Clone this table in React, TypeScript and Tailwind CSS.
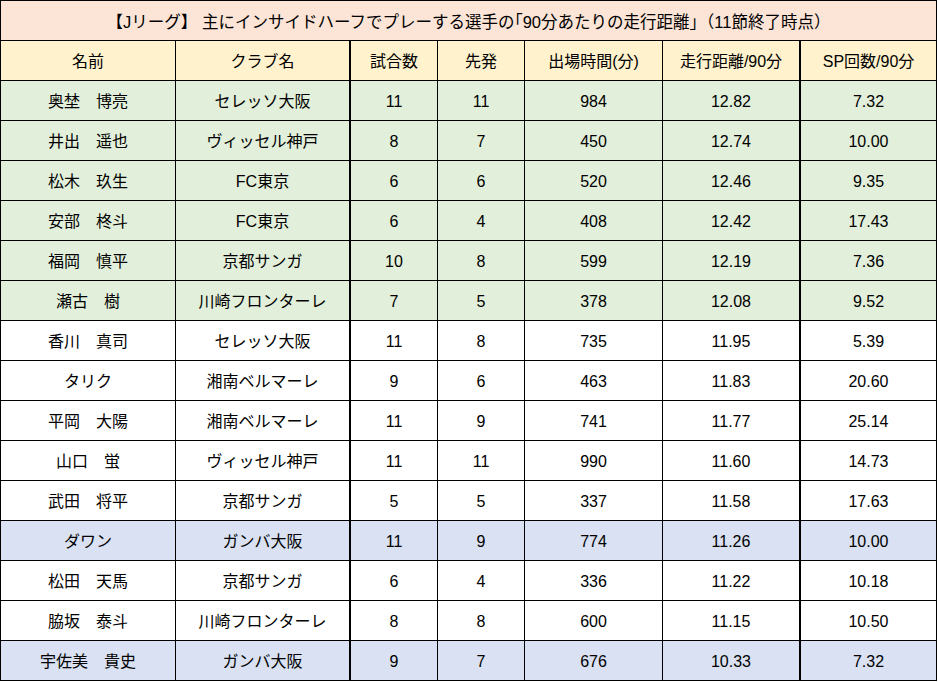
const rows: [string, string, number, number, number, string, string, string][] = [
  ['奥埜　博亮', 'セレッソ大阪', 11, 11, 984, '12.82', '7.32', 'g'],
  ['井出　遥也', 'ヴィッセル神戸', 8, 7, 450, '12.74', '10.00', 'g'],
  ['松木　玖生', 'FC東京', 6, 6, 520, '12.46', '9.35', 'g'],
  ['安部　柊斗', 'FC東京', 6, 4, 408, '12.42', '17.43', 'g'],
  ['福岡　慎平', '京都サンガ', 10, 8, 599, '12.19', '7.36', 'g'],
  ['瀬古　樹', '川崎フロンターレ', 7, 5, 378, '12.08', '9.52', 'g'],
  ['香川　真司', 'セレッソ大阪', 11, 8, 735, '11.95', '5.39', 'w'],
  ['タリク', '湘南ベルマーレ', 9, 6, 463, '11.83', '20.60', 'w'],
  ['平岡　大陽', '湘南ベルマーレ', 11, 9, 741, '11.77', '25.14', 'w'],
  ['山口　蛍', 'ヴィッセル神戸', 11, 11, 990, '11.60', '14.73', 'w'],
  ['武田　将平', '京都サンガ', 5, 5, 337, '11.58', '17.63', 'w'],
  ['ダワン', 'ガンバ大阪', 11, 9, 774, '11.26', '10.00', 'b'],
  ['松田　天馬', '京都サンガ', 6, 4, 336, '11.22', '10.18', 'w'],
  ['脇坂　泰斗', '川崎フロンターレ', 8, 8, 600, '11.15', '10.50', 'w'],
  ['宇佐美　貴史', 'ガンバ大阪', 9, 7, 676, '10.33', '7.32', 'b'],
];

const headers = ['名前', 'クラブ名', '試合数', '先発', '出場時間(分)', '走行距離/90分', 'SP回数/90分'];

// right borders: columns 2 and 6 have the heavier line
const edge = [
  'border-r',
  'border-r-2',
  'border-r',
  'border-r',
  'border-r',
  'border-r-2',
  'border-r',
];

const bg: Record<string, string> = {
  g: 'bg-[#e2efda]',
  w: 'bg-white',
  b: 'bg-[#d9e1f2]',
};

function Cell({ i, tone, children }: { i: number; tone: string; children: React.ReactNode }) {
  return (
    <div
      className={`flex h-10 items-center justify-center border-b border-black pt-[3px] ${edge[i]} ${tone} whitespace-nowrap`}
    >
      {children}
    </div>
  );
}

export default function App() {
  return (
    <div className="min-h-screen bg-white">
      <div
        className="grid w-[937px] grid-cols-[175px_175px_87px_87px_138px_138px_136px] border-l border-t border-black text-[16px] text-black"
        style={{ fontFamily: '"Liberation Sans", "Noto Sans CJK JP", sans-serif' }}
      >
        <div className="col-span-7 flex h-10 items-center justify-center border-b border-r border-black bg-[#fce4d6] pt-[3px] text-[16.5px]">
          【Jリーグ】 主にインサイドハーフでプレーする選手の｢90分あたりの走行距離｣（11節終了時点）
        </div>

        {headers.map((h, i) => (
          <Cell key={h} i={i} tone="bg-[#fff2cc]">
            {h}
          </Cell>
        ))}

        {rows.map((r) => {
          const tone = bg[r[7]];
          return r.slice(0, 7).map((v, i) => (
            <Cell key={`${r[0]}-${i}`} i={i} tone={tone}>
              {v}
            </Cell>
          ));
        })}
      </div>
    </div>
  );
}
